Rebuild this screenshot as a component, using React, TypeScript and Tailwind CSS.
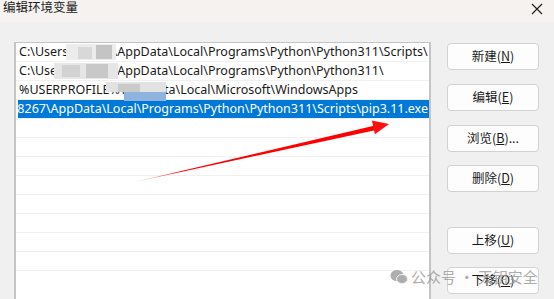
import React from "react";

const rows = [
  "C:\\Users\\xxxxxx\\AppData\\Local\\Programs\\Python\\Python311\\Scripts\\",
  "C:\\Users\\xxxxxx\\AppData\\Local\\Programs\\Python\\Python311\\",
  "%USERPROFILE%\\AppData\\Local\\Microsoft\\WindowsApps",
];

const buttons: { label: string; key: string; suffix?: string; mt: string }[] = [
  { label: "新建", key: "N", mt: "mt-0" },
  { label: "编辑", key: "E", mt: "mt-[14px]" },
  { label: "浏览", key: "B", suffix: "...", mt: "mt-[14px]" },
  { label: "删除", key: "D", mt: "mt-[13px]" },
  { label: "上移", key: "U", mt: "mt-[35px]" },
  { label: "下移", key: "O", mt: "mt-[13px]" },
];

const font = {
  fontFamily: '"Segoe UI", "Noto Sans", "Noto Sans CJK SC", sans-serif',
};

const mosaic: [number, number, number, number, string][] = [
  [66, 44, 50, 16, "#ececec"],
  [78, 47, 14, 12, "#d8d8d8"],
  [96, 45, 16, 14, "#c4c4c4"],
  [54, 63, 64, 16, "#e6e6e6"],
  [62, 65, 18, 12, "#d2d2d2"],
  [86, 64, 22, 14, "#c8c8c8"],
  [106, 82, 60, 10, "#e2e2e2"],
  [118, 84, 22, 8, "#cacaca"],
  [124, 92, 42, 9, "#8db3de"],
];

export default function App() {
  return (
    <div
      className="relative w-[554px] h-[299px] overflow-hidden bg-[#f0f0f0] text-[#1a1a1a]"
      style={font}
    >
      {/* title bar */}
      <div className="flex h-[22px] items-start justify-between bg-[#f5f2f0]">
        <span className="pl-[3px] text-[12.5px] leading-[16px] text-[#222]">编辑环境变量</span>
        <svg width="12" height="12" viewBox="0 0 12 12" className="mr-[11px] mt-[3px]">
          <path d="M1 1 L11 11 M11 1 L1 11" stroke="#222" strokeWidth="1.2" />
        </svg>
      </div>

      <div className="flex pl-[14px] pt-[20px]">
        {/* list box */}
        <div className="w-[417px] h-[260px] border-l-2 border-r-2 border-t border-[#c4c4c4] bg-white overflow-hidden">
          {rows.map((r, i) => (
            <div
              key={i}
              className="h-[19px] border-b border-[#f0f0f0] pl-[3px] text-[12.5px] leading-[18px] whitespace-nowrap overflow-hidden"
            >
              {r}
            </div>
          ))}
          <div className="ml-[2px] h-[19px] bg-[#0078d7] text-white text-[12.5px] leading-[18px] whitespace-nowrap overflow-hidden border-b border-[#f0f0f0] flex justify-end pr-[1px]">
            <span>38267\AppData\Local\Programs\Python\Python311\Scripts\pip3.11.exe</span>
          </div>
          {Array.from({ length: 8 }).map((_, i) => (
            <div key={i} className="h-[19px] border-b border-[#f0f0f0]" />
          ))}
        </div>

        {/* buttons */}
        <div className="ml-[16px] mt-[1px] flex flex-col">
          {buttons.map((b) => (
            <button
              key={b.label}
              className={`${b.mt} flex h-[27px] w-[92px] items-center justify-center rounded-[4px] border border-[#d2d2d2] bg-[#fdfdfd] text-[12.5px] text-[#1a1a1a]`}
              style={{ fontFamily: '"Noto Sans CJK SC", "Noto Sans", sans-serif' }}
            >
              {b.label}(<span className="underline">{b.key}</span>){b.suffix ?? ""}
            </button>
          ))}
        </div>
      </div>

      {/* mosaic blur + red arrow overlay */}
      <svg className="absolute left-0 top-0" width="554" height="299" viewBox="0 0 554 299">
        <defs>
          <linearGradient id="fade" x1="130" y1="183" x2="389" y2="124" gradientUnits="userSpaceOnUse">
            <stop offset="0" stopColor="#ff0000" stopOpacity="0.1" />
            <stop offset="0.2" stopColor="#ff0000" stopOpacity="1" />
            <stop offset="1" stopColor="#ff0000" stopOpacity="1" />
          </linearGradient>
        </defs>
        {mosaic.map(([x, y, w, h, c], i) => (
          <rect key={i} x={x} y={y} width={w} height={h} fill={c} />
        ))}
        <polygon points="130,183 374,125.8 375,130.2" fill="url(#fade)" />
        <polygon points="389,124 371.9,120.5 374.9,134.3" fill="#ff1010" />
      </svg>

      {/* watermark */}
      <div
        className="absolute left-[390px] top-[266px] flex items-center gap-[3px] text-[15px] text-[#9a9a9a] opacity-80 whitespace-nowrap"
        style={{ fontFamily: '"Noto Sans CJK SC", sans-serif' }}
      >
        <svg width="18" height="16" viewBox="0 0 18 16">
          <ellipse cx="7" cy="6.5" rx="6.5" ry="5.5" fill="#9a9a9a" />
          <ellipse cx="12" cy="10" rx="5.5" ry="4.5" fill="#9a9a9a" stroke="#f0f0f0" strokeWidth="1" />
        </svg>
        <span>公众号 · 天钥安全</span>
      </div>
    </div>
  );
}
